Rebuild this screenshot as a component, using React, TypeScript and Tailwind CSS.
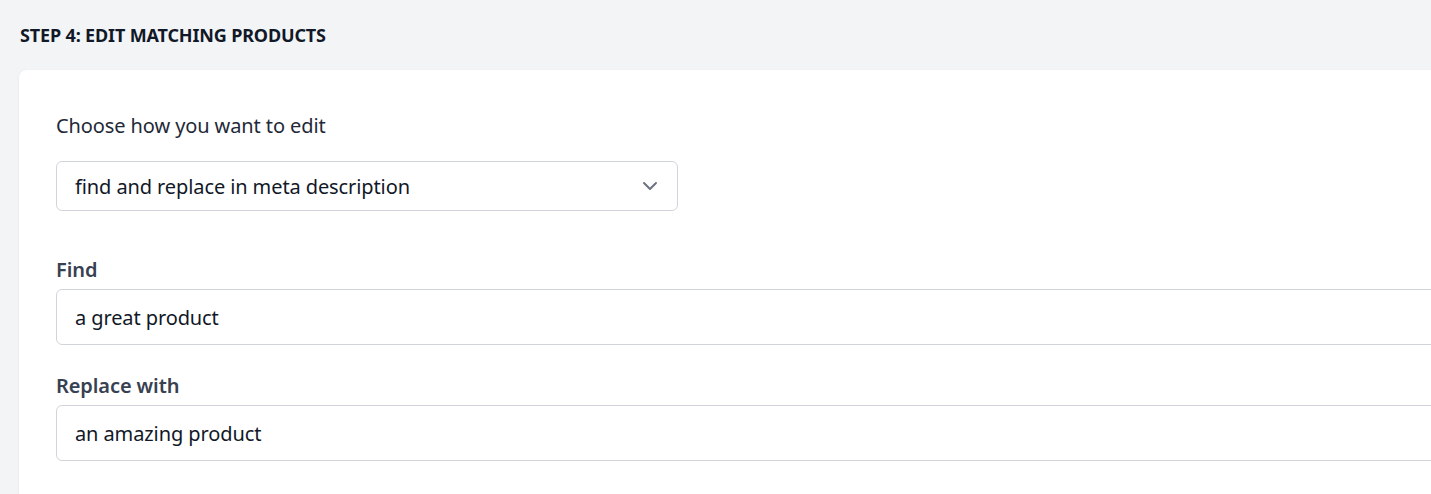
/* =======================
   Step 4 – edit products
======================= */

const Chevron = () => (
  <svg width="16" height="10" viewBox="0 0 16 10" fill="none" className="text-[#6b7280]">
    <path d="M2 2l6 6 6-6" stroke="currentColor" strokeWidth="2" strokeLinecap="round" strokeLinejoin="round" />
  </svg>
);

const App = () => {
  return (
    <div
      className="min-h-screen w-full overflow-hidden bg-[#f3f4f6]"
      style={{ fontFamily: '"Noto Sans", "Open Sans", sans-serif' }}
    >
      <div className="w-[1560px] pl-[19px]">
        {/* Header */}
        <h2 className="pl-px pt-[23px] pb-[22px] text-[18px] font-bold leading-[25px] tracking-[-0.15px] text-[#111827]">
          STEP 4: EDIT MATCHING PRODUCTS
        </h2>

        {/* Card */}
        <div className="rounded-lg bg-white px-[37px] pt-[42px] pb-10 shadow-[0_1px_3px_rgba(0,0,0,0.08)]">
          <p className="text-[20px] leading-[28px] tracking-[-0.1px] text-[#1f2937]">
            Choose how you want to edit
          </p>

          <div className="mt-[21px] flex h-[50px] w-[622px] items-center justify-between rounded-md border border-[#d1d5db] bg-white pl-[18px] pr-[19px]">
            <span className="pt-[2px] text-[20px] tracking-[-0.1px] text-[#111827]">
              find and replace in meta description
            </span>
            <Chevron />
          </div>

          <label className="mt-[45px] block text-[20px] font-semibold leading-[28px] tracking-[-0.1px] text-[#374151]">
            Find
          </label>
          <input
            readOnly
            value="a great product"
            className="mt-[5px] block h-[56px] w-full rounded-md border border-[#d1d5db] px-[18px] text-[20px] tracking-[-0.1px] text-[#111827] outline-none"
          />

          <label className="mt-[27px] block text-[20px] font-semibold leading-[28px] tracking-[-0.1px] text-[#374151]">
            Replace with
          </label>
          <input
            readOnly
            value="an amazing product"
            className="mt-[5px] block h-[56px] w-full rounded-md border border-[#d1d5db] px-[18px] text-[20px] tracking-[-0.1px] text-[#111827] outline-none"
          />
        </div>
      </div>
    </div>
  );
};

export default App;
